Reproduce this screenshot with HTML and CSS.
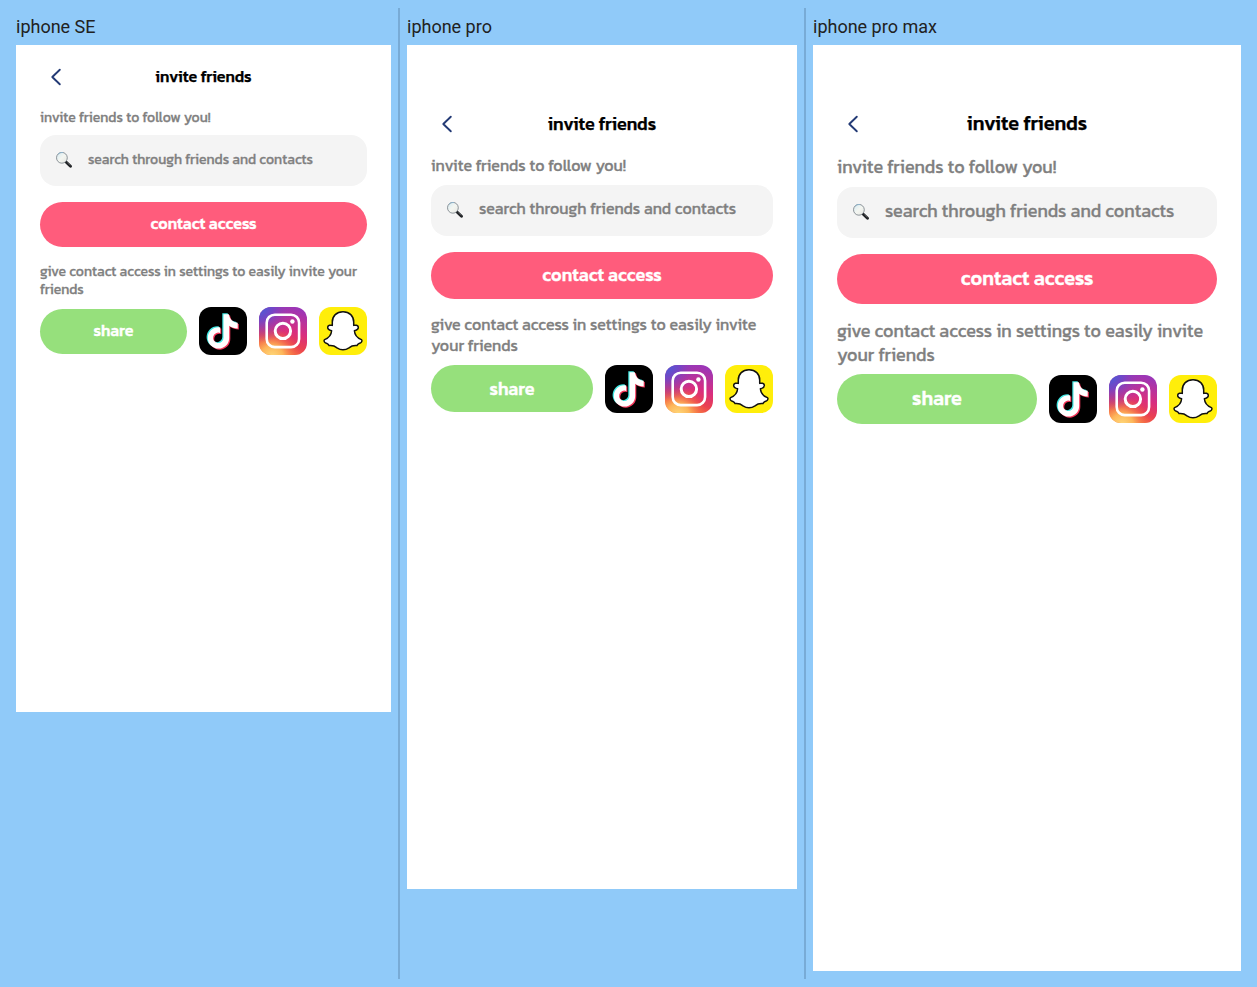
FILE: index.html
```html
<!DOCTYPE html>
<html lang="en">
<head>
<meta charset="utf-8">
<title>Invite friends</title>
<link rel="stylesheet" href="styles.css">
</head>
<body>
<svg class="defs" width="0" height="0" aria-hidden="true">
  <defs>
    <linearGradient id="ig-base" x1=".35" y1="1" x2=".7" y2="0">
      <stop offset="0" stop-color="#f9803c"/>
      <stop offset=".28" stop-color="#ea4150"/>
      <stop offset=".55" stop-color="#d92e7f"/>
      <stop offset="1" stop-color="#9b36b7"/>
    </linearGradient>
    <radialGradient id="ig-warm" cx=".27" cy="1.05" r=".6">
      <stop offset="0" stop-color="#ffdc7d"/>
      <stop offset=".4" stop-color="#fdb65a"/>
      <stop offset="1" stop-color="#f4583f" stop-opacity="0"/>
    </radialGradient>
    <radialGradient id="ig-cool" cx="0" cy="0" r=".75">
      <stop offset="0" stop-color="#3f62dc"/>
      <stop offset=".4" stop-color="#6a48cc" stop-opacity=".85"/>
      <stop offset="1" stop-color="#a034b4" stop-opacity="0"/>
    </radialGradient>
    <linearGradient id="lens" x1="0" y1="0" x2="1" y2="1">
      <stop offset="0" stop-color="#d3e9f2"/>
      <stop offset=".5" stop-color="#f4f6f1"/>
      <stop offset="1" stop-color="#e3e5e2"/>
    </linearGradient>
    <symbol id="back" viewBox="0 0 32 32">
      <path d="M19.800 8.700 12.300 16 19.800 23.300" fill="none" stroke="#233a75" stroke-width="1.900" stroke-linecap="round" stroke-linejoin="round"/>
    </symbol>
    <symbol id="search" viewBox="0 0 16 16">
      <path d="m10.300 10.300 4.200 4" stroke="#202225" stroke-width="2.900" stroke-linecap="round"/>
      <path d="m11.300 10.500 3 2.800" stroke="#777b7e" stroke-width=".6"/>
      <circle cx="5.900" cy="5.800" r="5.400" fill="url(#lens)" stroke="#81898e" stroke-width=".9"/>
      <path d="M2.200 2A5.400 5.400 0 0 1 7 .5" fill="none" stroke="#8db5cf" stroke-width=".9"/>
    </symbol>
    <symbol id="tiktok" viewBox="0 0 48 48">
      <defs>
        <path id="note" d="M24.300 6.800H29.700C30.300 11.500 33.500 15 38.500 15.400V21C35.300 21 32.300 20 30 18.300V30.500A10.700 10.700 0 1 1 19.300 19.800L21 19.900V25.600A5.200 5.200 0 1 0 24.300 30.500Z"/>
      </defs>
      <rect width="48" height="48" fill="#000"/>
      <use href="#note" fill="#41e7e2" transform="translate(-1 -.5)"/>
      <use href="#note" fill="#f5385b" transform="translate(1.300 1.500)"/>
      <use href="#note" fill="#fff" transform="translate(.2 .4)"/>
    </symbol>
    <symbol id="instagram" viewBox="0 0 48 48">
      <rect width="48" height="48" fill="url(#ig-base)"/>
      <rect width="48" height="48" fill="url(#ig-warm)"/>
      <rect width="48" height="48" fill="url(#ig-cool)"/>
      <g fill="none" stroke="#fff">
        <rect x="7.700" y="7.700" width="32.400" height="32.400" rx="8" stroke-width="2.600"/>
        <circle cx="23.900" cy="23.900" r="7.700" stroke-width="3"/>
      </g>
      <circle cx="33.400" cy="14.500" r="2.200" fill="#fff"/>
    </symbol>
    <symbol id="snapchat" viewBox="0 0 48 48">
      <rect width="48" height="48" fill="#ffee0a"/>
      <path d="M24 4.800C17.500 4.800 13.300 9 13.300 15V18.400C11.500 17.900 9.100 18.200 8.700 20C8.400 22 10.500 23.200 12.600 23.800C12.300 28.400 9 31.300 5.600 32.600C4.600 33.200 5 35.100 6.400 35.800C8 36.600 9.300 36.500 10 38.600C13.300 38.200 15.800 39 18 40.800C20 42.200 21.700 42.800 24 42.800S28 42.200 30 40.800C32.200 39 34.700 38.200 38 38.600C38.700 36.500 40 36.600 41.600 35.800C43 35.100 43.400 33.200 42.400 32.600C39 31.300 35.700 28.400 35.400 23.800C37.500 23.200 39.600 22 39.300 20C38.900 18.200 36.500 17.900 34.700 18.400V15C34.700 9 30.500 4.800 24 4.800Z" fill="#fff" stroke="#111" stroke-width="1.500" stroke-linejoin="round"/>
    </symbol>
  </defs>
</svg>
<main class="board">
  <section class="column small">
    <h2 class="label">iphone SE</h2>
    <div class="phone">
      <header class="top"><svg class="back"><use href="#back"/></svg><h1 class="title">invite friends</h1></header>
      <p class="copy">invite friends to follow you!</p>
      <div class="search"><svg class="glass"><use href="#search"/></svg><span class="hint">search through friends and contacts</span></div>
      <button class="pill access">contact access</button>
      <p class="copy">give contact access in settings to easily invite your friends</p>
      <div class="share-row"><button class="pill share">share</button><svg class="app"><use href="#tiktok"/></svg><svg class="app"><use href="#instagram"/></svg><svg class="app"><use href="#snapchat"/></svg></div>
    </div>
  </section>
  <section class="column medium">
    <h2 class="label">iphone pro</h2>
    <div class="phone">
      <header class="top"><svg class="back"><use href="#back"/></svg><h1 class="title">invite friends</h1></header>
      <p class="copy">invite friends to follow you!</p>
      <div class="search"><svg class="glass"><use href="#search"/></svg><span class="hint">search through friends and contacts</span></div>
      <button class="pill access">contact access</button>
      <p class="copy">give contact access in settings to easily invite your friends</p>
      <div class="share-row"><button class="pill share">share</button><svg class="app"><use href="#tiktok"/></svg><svg class="app"><use href="#instagram"/></svg><svg class="app"><use href="#snapchat"/></svg></div>
    </div>
  </section>
  <section class="column large">
    <h2 class="label">iphone pro max</h2>
    <div class="phone">
      <header class="top"><svg class="back"><use href="#back"/></svg><h1 class="title">invite friends</h1></header>
      <p class="copy">invite friends to follow you!</p>
      <div class="search"><svg class="glass"><use href="#search"/></svg><span class="hint">search through friends and contacts</span></div>
      <button class="pill access">contact access</button>
      <p class="copy">give contact access in settings to easily invite your friends</p>
      <div class="share-row"><button class="pill share">share</button><svg class="app"><use href="#tiktok"/></svg><svg class="app"><use href="#instagram"/></svg><svg class="app"><use href="#snapchat"/></svg></div>
    </div>
  </section>
</main>
</body>
</html>
```

FILE: styles.css
```css
* { box-sizing: border-box; }
body {
  margin: 0;
  padding: 8px;
  background: #90caf9;
  font-family: Kanit, "Noto Sans", sans-serif;
}
.defs { display: block; height: 0; }
.board { display: flex; align-items: stretch; }
.column {
  padding: 8px 7px 8px;
  border-right: 2px solid #78abd6;
  height: 971px;
}
.column:first-child { padding-left: 8px; }
.column:last-child { border-right: 0; }
.label {
  margin: 0;
  height: 29px;
  font: 400 18px/22px Roboto, sans-serif;
  color: #212121;
}
.phone { background: #fff; padding: 0 24px; }
.small .phone { width: 375px; height: 667px; --copy: 14px; --strong: 16px; }
.medium .phone { width: 390px; height: 844px; padding-top: 47px; --copy: 16px; --strong: 18px; }
.large .phone { width: 428px; height: 926px; padding-top: 47px; --copy: 18px; --strong: 20px; }
.top {
  display: grid;
  grid-template-columns: 32px 1fr 32px;
  align-items: center;
  height: 64px;
}
.back { width: 32px; height: 32px; }
.title {
  margin: 0;
  text-align: center;
  font-size: var(--strong);
  line-height: 1.3;
  font-weight: 500;
  -webkit-text-stroke: .25px;
}
.small .title, .large .title { padding-bottom: 2px; }
.copy {
  margin: 0;
  font-size: var(--copy);
  line-height: 1.3;
  font-weight: 400;
  color: #808080;
  -webkit-text-stroke: .3px;
}
.medium .copy, .large .copy { margin-top: -1px; padding-bottom: 1px; }
.search {
  display: flex;
  align-items: center;
  gap: 16px;
  height: 50.8px;
  margin: 8px 0 16px;
  padding: 0 16px;
  border-radius: 16px;
  background: #f4f4f4;
}
.glass { width: 16px; height: 16px; margin-bottom: 1px; }
.hint {
  font-size: var(--copy);
  line-height: 1.3;
  color: #808080;
  -webkit-text-stroke: .3px;
}
.medium .hint, .large .hint { padding-bottom: 4px; }
.pill {
  display: block;
  padding: 11px 12px 13px;
  border: 0;
  border-radius: 25px;
  font-family: inherit;
  font-size: var(--strong);
  line-height: 1.3;
  font-weight: 500;
  color: #fff;
  -webkit-text-stroke: .35px;
}
.access { width: 100%; margin-bottom: 16px; background: #ff5c7c; }
.share-row { display: flex; align-items: center; gap: 12px; padding-top: 8px; }
.share { flex: 1; background: #96e07c; }
.medium .share { padding-top: 12px; padding-bottom: 12px; }
.app { width: 48px; height: 48px; border-radius: 12px; }
.large .share-row { padding-top: 7px; }
```
